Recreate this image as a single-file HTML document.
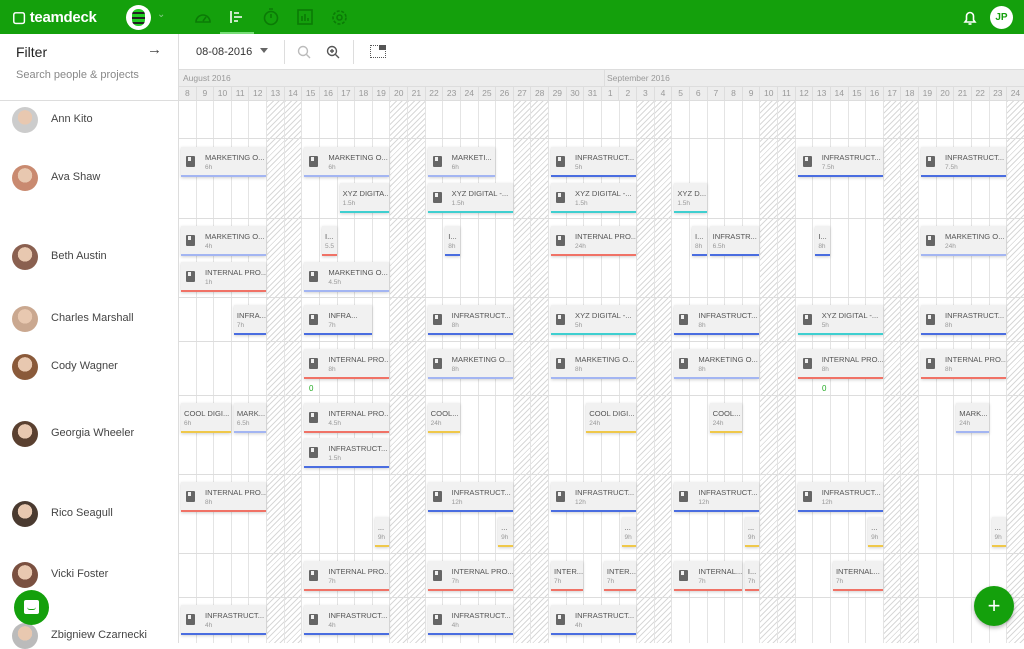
<!DOCTYPE html>
<html><head><meta charset="utf-8"><style>
*{box-sizing:border-box;margin:0;padding:0}
body{width:1024px;height:643px;overflow:hidden;font-family:"Liberation Sans",sans-serif;background:#fff;position:relative;color:#333}
.top{position:absolute;left:0;top:0;width:1024px;height:34px;background:#14a00c}
.abs{position:absolute}
.left{position:absolute;left:0;top:34px;width:179px;height:609px;background:#fff;border-right:1px solid #ddd;z-index:3}
.av{position:absolute;left:12px;width:26px;height:26px;border-radius:50%;background:#c9a58c}
.pn{position:absolute;left:51px;font-size:11px;color:#444}
.grid{position:absolute;left:179px;top:70px;width:845px;height:573px;overflow:hidden}
.card{position:absolute;height:30px;background:#f1f1f1;box-shadow:0 1px 3px rgba(0,0,0,.18);overflow:hidden;white-space:nowrap}
.card .t{position:absolute;top:6px;font-size:7.6px;color:#555;letter-spacing:0}
.card .h{position:absolute;top:17px;font-size:6.5px;color:#999}
.card .ic{position:absolute;left:5px;top:9px;width:9px;height:11px;background:#666;border-radius:1px}
.card .ic:after{content:"";position:absolute;left:2px;top:1px;width:3px;height:4px;background:#f1f1f1}
.card .b{position:absolute;left:0;right:0;bottom:0;height:2px}
</style></head><body>
<div class="top">
 <div class="abs" style="left:12px;top:8px;color:#fff;font-size:15px;font-weight:bold;letter-spacing:-.3px">▢ teamdeck</div>
 <div class="abs" style="left:126px;top:5px;width:25px;height:25px;border-radius:50%;background:#fff"><div class="abs" style="left:6px;top:4px;width:13px;height:17px;border-radius:6px;background:repeating-linear-gradient(#2c2 0 3px,#222 3px 5px)"></div></div>
 <div class="abs" style="left:157px;top:9px;color:#8c8;font-size:10px">⌄</div>
 <svg class="abs" style="left:194px;top:9px" width="18" height="16" fill="none" stroke="#0b7a06" stroke-width="1.6"><path d="M2 13a7 7 0 1 1 14 0z"/><path d="M9 12l3-4"/></svg>
 <div class="abs" style="left:220px;top:32px;width:34px;height:2px;background:#7d7"></div>
 <svg class="abs" style="left:229px;top:10px" width="16" height="14" fill="none" stroke="#fff" stroke-width="1.6"><path d="M2 1v12M5 3h5M5 7h8M5 11h4"/></svg>
 <svg class="abs" style="left:262px;top:8px" width="18" height="18" fill="none" stroke="#0b7a06" stroke-width="1.6"><circle cx="9" cy="10" r="6.5"/><path d="M7 1h4M9 6v4"/></svg>
 <svg class="abs" style="left:297px;top:9px" width="16" height="16" fill="none" stroke="#0b7a06" stroke-width="1.6"><rect x="1" y="1" width="14" height="14"/><path d="M5 12V7M8 12V5M11 12V9"/></svg>
 <svg class="abs" style="left:331px;top:9px" width="17" height="17" fill="none" stroke="#0b7a06" stroke-width="1.6"><circle cx="8.5" cy="8.5" r="2.5"/><circle cx="8.5" cy="8.5" r="6.5" stroke-dasharray="3 1.6"/></svg>
 <svg class="abs" style="left:963px;top:10px" width="14" height="16" fill="none" stroke="#fff" stroke-width="1.6"><path d="M2 12h10l-1.5-2V6a3.5 3.5 0 0 0-7 0v4z"/><path d="M5.5 14h3"/></svg>
 <div class="abs" style="left:990px;top:6px;width:23px;height:23px;border-radius:50%;background:#fff;color:#14a00c;font-size:10px;font-weight:bold;text-align:center;line-height:23px">JP</div>
</div>
<div class="abs" style="left:179px;top:34px;width:845px;height:36px;border-bottom:1px solid #ddd">
 <div class="abs" style="left:17px;top:12px;font-size:11px;color:#333">08-08-2016</div>
 <div class="abs" style="left:81px;top:14px;border:4px solid transparent;border-top:5px solid #666"></div>
 <div class="abs" style="left:105px;top:6px;width:1px;height:24px;background:#ddd"></div>
 <svg class="abs" style="left:118px;top:11px" width="14" height="14" fill="none" stroke="#bbb" stroke-width="1.4"><circle cx="6" cy="6" r="4.5"/><path d="M9.5 9.5l3.5 3.5"/></svg>
 <svg class="abs" style="left:147px;top:11px" width="14" height="14" fill="none" stroke="#555" stroke-width="1.4"><circle cx="6" cy="6" r="4.5"/><path d="M9.5 9.5l3.5 3.5M4 6h4M6 4v4"/></svg>
 <div class="abs" style="left:174px;top:6px;width:1px;height:24px;background:#ddd"></div>
 <div class="abs" style="left:191px;top:11px;width:16px;height:13px;border:1px dotted #555"></div>
 <div class="abs" style="left:200px;top:11px;width:7px;height:5px;background:#555"></div>
</div>
<div class="left">
 <div class="abs" style="left:16px;top:10px;font-size:14px;color:#222">Filter</div>
 <div class="abs" style="left:147px;top:7px;font-size:15px;color:#444">→</div>
 <div class="abs" style="left:16px;top:35px;font-size:11px;color:#888">Search people &amp; projects</div>
 <div class="abs" style="left:0;top:66px;width:179px;height:1px;background:#ddd"></div>
 <div id="people"></div>
</div>
<div class="abs" style="left:14px;top:590px;width:35px;height:35px;border-radius:50%;background:#14a00c;z-index:5"><div class="abs" style="left:10px;top:10px;width:15px;height:14px;border-radius:2px;background:#fff"></div><div class="abs" style="left:13px;top:17px;width:9px;height:3px;border-bottom:1.5px solid #14a00c;border-radius:0 0 5px 5px"></div></div>
<div class="grid" id="g"></div>
<div class="abs" style="left:974px;top:586px;width:40px;height:40px;border-radius:50%;background:#14a00c;color:#fff;font-size:22px;text-align:center;line-height:39px;z-index:5;box-shadow:0 2px 4px rgba(0,0,0,.3)">+</div>
<script>
var W=17.62,g=document.getElementById('g'),h='';
var rows=[[101,138],[138,218],[218,297],[297,341],[341,395],[395,474],[474,553],[553,597],[597,643]];
h+='<div class="abs" style="left:0;top:0;width:845px;height:31px;background:#ededed;border-bottom:1px solid #ddd"></div>';
h+='<div class="abs" style="left:4px;top:3px;font-size:8.5px;color:#999">August 2016</div>';
h+='<div class="abs" style="left:428px;top:3px;font-size:8.5px;color:#999">September 2016</div>';
h+='<div class="abs" style="left:0;top:16px;width:845px;height:1px;background:#ddd"></div>';
h+='<div class="abs" style="left:425px;top:0;width:1px;height:16px;background:#ddd"></div>';
for(var i=0;i<49;i++){var d=i<24?8+i:i-23,x=i*W,we=(i%7==5||i%7==6);
 h+='<div class="abs" style="left:'+x+'px;top:16px;width:'+W+'px;height:15px;border-right:1px solid #ddd;font-size:8.5px;color:#999;text-align:center;line-height:15px">'+d+'</div>';
 if(we)h+='<div class="abs" style="left:'+x+'px;top:31px;width:'+W+'px;height:545px;background:repeating-linear-gradient(135deg,#d8d8d8 0 1px,#fff 1px 4px)"></div>';
 h+='<div class="abs" style="left:'+(x+W-1)+'px;top:31px;width:1px;height:545px;background:#e4e4e4"></div>';}
rows.forEach(function(r){h+='<div class="abs" style="left:0;top:'+(r[1]-70)+'px;width:845px;height:1px;background:#ddd"></div>';});
var C={b:'#4a6de0',m:'#a3b5f2',r:'#f07266',c:'#3fcfd0',y:'#efc84a'};
function cd(i,s,y,t,hr,c,ic){var x=i*W+2,w=s*W-3;
 h+='<div class="card" style="left:'+x+'px;top:'+(y-70)+'px;width:'+w+'px">'+(ic?'<div class="ic"></div>':'')+'<div class="t" style="left:'+(ic?24:3)+'px">'+t+'</div><div class="h" style="left:'+(ic?24:3)+'px">'+hr+'</div><div class="b" style="background:'+C[c]+'"></div></div>';}
var L=[
[0,5,147,'MARKETING O...','6h','m',1],[7,5,147,'MARKETING O...','6h','m',1],[14,4,147,'MARKETI...','6h','m',1],[21,5,147,'INFRASTRUCT...','5h','b',1],[35,5,147,'INFRASTRUCT...','7.5h','b',1],[42,5,147,'INFRASTRUCT...','7.5h','b',1],
[9,3,183,'XYZ DIGITA...','1.5h','c',0],[14,5,183,'XYZ DIGITAL -...','1.5h','c',1],[21,5,183,'XYZ DIGITAL -...','1.5h','c',1],[28,2,183,'XYZ D...','1.5h','c',0],
[0,5,226,'MARKETING O...','4h','m',1],[8,1,226,'I...','5.5','r',0],[15,1,226,'I...','8h','b',0],[21,5,226,'INTERNAL PRO...','24h','r',1],[29,1,226,'I...','8h','b',0],[30,3,226,'INFRASTR...','6.5h','b',0],[36,1,226,'I...','8h','b',0],[42,5,226,'MARKETING O...','24h','m',1],
[0,5,262,'INTERNAL PRO...','1h','r',1],[7,5,262,'MARKETING O...','4.5h','m',1],
[3,2,305,'INFRA...','7h','b',0],[7,4,305,'INFRA...','7h','b',1],[14,5,305,'INFRASTRUCT...','8h','b',1],[21,5,305,'XYZ DIGITAL -...','5h','c',1],[28,5,305,'INFRASTRUCT...','8h','b',1],[35,5,305,'XYZ DIGITAL -...','5h','c',1],[42,5,305,'INFRASTRUCT...','8h','b',1],
[7,5,349,'INTERNAL PRO...','8h','r',1],[14,5,349,'MARKETING O...','8h','m',1],[21,5,349,'MARKETING O...','8h','m',1],[28,5,349,'MARKETING O...','8h','m',1],[35,5,349,'INTERNAL PRO...','8h','r',1],[42,5,349,'INTERNAL PRO...','8h','r',1],
[0,3,403,'COOL DIGI...','6h','y',0],[3,2,403,'MARK...','6.5h','m',0],[7,5,403,'INTERNAL PRO...','4.5h','r',1],[14,2,403,'COOL...','24h','y',0],[23,3,403,'COOL DIGI...','24h','y',0],[30,2,403,'COOL...','24h','y',0],[44,2,403,'MARK...','24h','m',0],
[7,5,438,'INFRASTRUCT...','1.5h','b',1],
[0,5,482,'INTERNAL PRO...','8h','r',1],[14,5,482,'INFRASTRUCT...','12h','b',1],[21,5,482,'INFRASTRUCT...','12h','b',1],[28,5,482,'INFRASTRUCT...','12h','b',1],[35,5,482,'INFRASTRUCT...','12h','b',1],
[11,1,517,'...','9h','y',0],[18,1,517,'...','9h','y',0],[25,1,517,'...','9h','y',0],[32,1,517,'...','9h','y',0],[39,1,517,'...','9h','y',0],[46,1,517,'...','9h','y',0],
[7,5,561,'INTERNAL PRO...','7h','r',1],[14,5,561,'INTERNAL PRO...','7h','r',1],[21,2,561,'INTER...','7h','r',0],[24,2,561,'INTER...','7h','r',0],[28,4,561,'INTERNAL...','7h','r',1],[32,1,561,'I...','7h','r',0],[37,3,561,'INTERNAL...','7h','r',0],
[0,5,605,'INFRASTRUCT...','4h','b',1],[7,5,605,'INFRASTRUCT...','4h','b',1],[14,5,605,'INFRASTRUCT...','4h','b',1],[21,5,605,'INFRASTRUCT...','4h','b',1]];
L.forEach(function(a){cd.apply(null,a)});
h+='<div class="abs" style="left:130px;top:314px;font-size:8px;color:#2a2">0</div><div class="abs" style="left:643px;top:314px;font-size:8px;color:#2a2">0</div>';
g.innerHTML=h;
var P=[['Ann Kito',120,'#ccc'],['Ava Shaw',178,'#c98a70'],['Beth Austin',257,'#8a6050'],['Charles Marshall',319,'#caa890'],['Cody Wagner',367,'#8a5a3a'],['Georgia Wheeler',434,'#5a4030'],['Rico Seagull',514,'#4a3a30'],['Vicki Foster',575,'#7a5040'],['Zbigniew Czarnecki',636,'#bbb']],ph='';
P.forEach(function(p){ph+='<div class="av" style="top:'+(p[1]-34-13)+'px;background:radial-gradient(circle at 50% 40%,#e8c8b0 0 35%,'+p[2]+' 36%)"></div><div class="pn" style="top:'+(p[1]-34-7)+'px">'+p[0]+'</div>';});
document.getElementById('people').innerHTML=ph;
</script>
</body></html>
